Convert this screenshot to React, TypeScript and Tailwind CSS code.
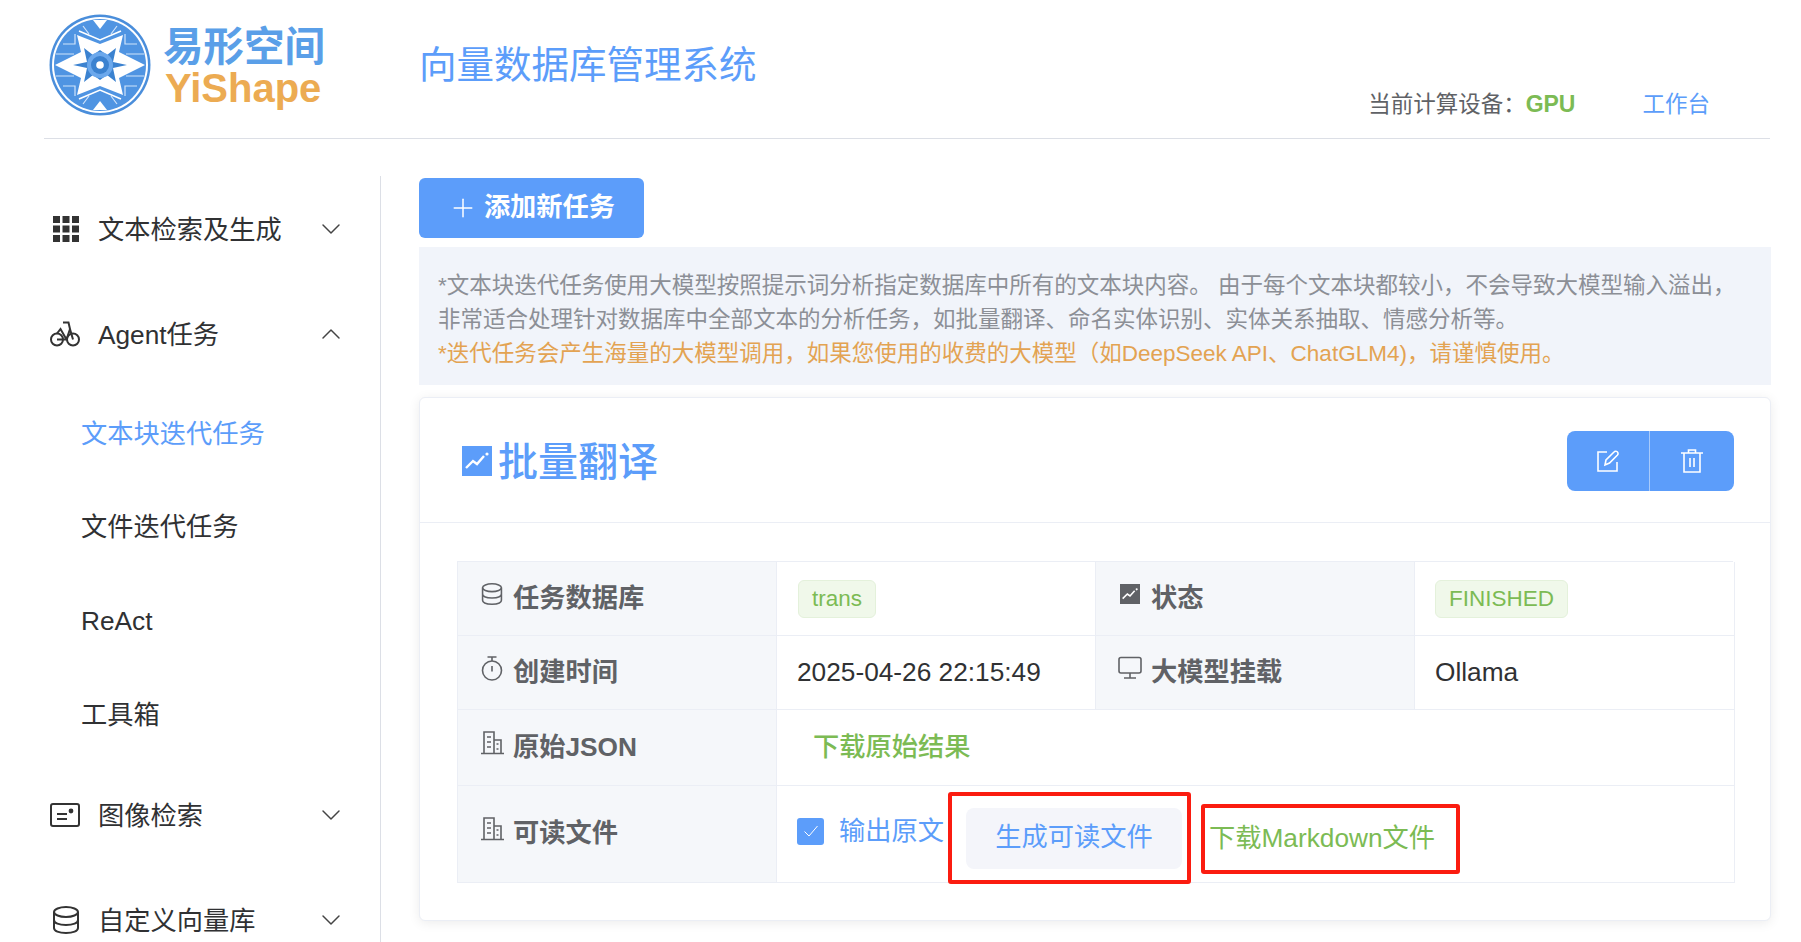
import { ChevronDown, ChevronUp, Plus } from "lucide-react";
import React from "react";

const blue = "#5c9dfa";

const LogoMark = () => (
  <svg viewBox="0 0 102 102" className="h-[102px] w-[102px] shrink-0">
    <circle cx="51" cy="51" r="50.5" fill="#4a8edb" />
    <circle cx="51" cy="51" r="48" fill="#fff" />
    <circle cx="51" cy="51" r="46" fill="#4f94e2" />
    <path
      d="M14 30h12v-10M88 30h-12v-10M14 72h12v10M88 72h-12v10M7 40h18M95 40h-18M7 62h18M95 62h-18M34 12l6 8M68 12l-6 8M34 90l6-8M68 90l-6-8"
      stroke="#cfe3fa"
      strokeWidth="1.2"
      fill="none"
    />
    <path d="M44 6h14L51 15Z" fill="#fff" />
    <path d="M44 96h14L51 87Z" fill="#fff" />
    <path d="M30 17 51 26 72 17" stroke="#fff" strokeWidth="1.6" fill="none" />
    <path d="M30 85 51 76 72 85" stroke="#fff" strokeWidth="1.6" fill="none" />
    <path d="M28 21 51 30 74 21 70 38 96 51 70 64 74 81 51 72 28 81 32 64 6 51 32 38Z" fill="#fff" />
    <path
      d="M24 51 38 48 35 34 44 41 51 36 58 41 67 34 64 48 78 51 64 54 67 68 58 61 51 66 44 61 35 68 38 54Z"
      fill="#3b82d0"
    />
    <circle cx="51" cy="51" r="13" fill="#6ba8ec" />
    <circle cx="51" cy="51" r="9" fill="#3b82d0" />
    <circle cx="51" cy="51" r="3.8" fill="#fff" />
  </svg>
);

const GridIcon = () => (
  <svg viewBox="0 0 26 26" className="ml-[3px] h-[26px] w-[26px]" fill="#333">
    {[0, 9.5, 19].map((y) =>
      [0, 9.5, 19].map((x) => (
        <rect key={`${x}-${y}`} x={x} y={y} width="7" height="7" />
      ))
    )}
  </svg>
);

const BikeIcon = () => (
  <svg viewBox="0 0 30 26" className="h-[26px] w-[30px]" fill="none" stroke="#333" strokeWidth="2">
    <circle cx="7" cy="18.5" r="6" />
    <circle cx="23" cy="18.5" r="6" />
    <path d="M7 18.5h9.5L20 8l-1.5-6.5H13M7 12.5 10.5 8l6 10.5M20 8l3 10.5" />
  </svg>
);

const CardIcon = () => (
  <svg viewBox="0 0 30 24" className="h-[24px] w-[30px]" fill="none" stroke="#333" strokeWidth="2">
    <rect x="1" y="1" width="28" height="22" rx="2" />
    <path d="M7 11h10M7 16h10" />
    <circle cx="21" cy="8" r="1.4" fill="#333" />
  </svg>
);

const DbIcon = ({ size = "large" }: { size?: "large" | "small" }) => (
  <svg
    viewBox="0 0 28 28"
    className={size === "large" ? "ml-[2px] h-[28px] w-[28px]" : "h-[22px] w-[22px]"}
    fill="none"
    stroke={size === "large" ? "#333" : "#606266"}
    strokeWidth="2"
  >
    <ellipse cx="14" cy="6" rx="12" ry="5" />
    <path d="M2 6v16c0 3 5 5 12 5s12-2 12-5V6M2 14c0 3 5 5 12 5s12-2 12-5" />
  </svg>
);

const EditIcon = () => (
  <svg viewBox="0 0 22 22" className="h-[22px] w-[22px]" fill="none" stroke="#fff" strokeWidth="1.6">
    <path d="M10 2H1v19h19v-9" />
    <path d="M8 15l1-5 8-8a1.8 1.8 0 0 1 3.5 3l-8 8Z" />
  </svg>
);

const TrashIcon = () => (
  <svg viewBox="0 0 24 24" className="h-[24px] w-[24px]" fill="none" stroke="#fff" strokeWidth="1.6">
    <path d="M1 4h22M4 4v19h16V4M8.5 4V1h7v3M10 9v9M14 9v9" />
  </svg>
);

const ChartIcon = ({ size = "large" }: { size?: "large" | "small" }) => (
  <svg
    viewBox="0 0 30 30"
    className={size === "large" ? "h-[30px] w-[30px]" : "h-[20px] w-[20px]"}
  >
    <rect width="30" height="30" fill={size === "large" ? blue : "#606266"} />
    <path d="M4 22l7-7 4 3 7-8" fill="none" stroke="#fff" strokeWidth="2.4" />
    <circle cx="25" cy="8" r="1.6" fill="#fff" />
  </svg>
);

const TimerIcon = () => (
  <svg viewBox="0 0 22 25" className="h-[25px] w-[22px]" fill="none" stroke="#606266" strokeWidth="1.6">
    <circle cx="11" cy="14.5" r="9.5" />
    <path d="M6.5 1h9M11 1.5v3.5M11 10v5.5" />
  </svg>
);

const MonitorIcon = () => (
  <svg viewBox="0 0 24 24" className="h-[24px] w-[24px]" fill="none" stroke="#606266" strokeWidth="1.6">
    <rect x="1" y="1.5" width="22" height="15.5" rx="2" />
    <path d="M12 17v5M6 22h12" />
  </svg>
);

const OfficeIcon = () => (
  <svg viewBox="0 0 23 24" className="h-[24px] w-[23px]" fill="none" stroke="#606266" strokeWidth="1.6">
    <path d="M0 22.5h23M3 22.5V1h10v21.5M13 9h7v13.5M6 6h4M6 11h4M6 16h4M15.5 13h2M15.5 18h2" />
  </svg>
);

const SideItem = ({
  icon,
  label,
  open = false,
}: {
  icon: React.ReactNode;
  label: string;
  open?: boolean;
}) => (
  <div className="flex h-[105px] items-center pr-[33px] pl-[50px] text-[26.25px] text-[#303133]">
    <div className="flex w-[48px] shrink-0 items-center">{icon}</div>
    <span className="pt-[5px]">{label}</span>
    <span className="ml-auto">
      {open ? (
        <ChevronUp className="h-[32px] w-[32px] text-[#444]" strokeWidth={1.1} />
      ) : (
        <ChevronDown className="h-[32px] w-[32px] text-[#444]" strokeWidth={1.1} />
      )}
    </span>
  </div>
);

const SubItem = ({ label, active = false }: { label: string; active?: boolean }) => (
  <div
    className={`flex h-[94px] items-center pl-[81px] text-[26.25px] ${
      active ? "pt-[3px] text-[#5c9dfa]" : "pt-[1px] text-[#303133]"
    }`}
  >
    {label}
  </div>
);

const LabelCell = ({
  icon,
  label,
  className,
}: {
  icon: React.ReactNode;
  label: string;
  className: string;
}) => (
  <div
    className={`flex items-start gap-[9px] border-r border-b border-[#ebeef5] bg-[#f5f7fa] pl-[22px] text-[26.25px] font-bold text-[#606266] ${className}`}
  >
    <span className="flex h-[32px] w-[24px] items-center justify-center">{icon}</span>
    <span className="leading-[40px]">{label}</span>
  </div>
);

const Tag = ({ children }: { children: React.ReactNode }) => (
  <span className="inline-flex h-[38px] items-center rounded-[6px] border border-[#e4f1db] bg-[#f0f8ea] px-[13px] text-[22.5px] text-[#7cbb54]">
    {children}
  </span>
);

export default function App() {
  return (
    <div className="h-[942px] overflow-hidden bg-white font-['Liberation_Sans','Noto_Sans_CJK_SC',sans-serif]">
      <header className="mx-[44px] flex h-[139px] w-[1726px] border-b border-[#dcdfe6]">
        <div className="flex w-[375px] shrink-0 items-start pt-[14px] pl-[5px]">
          <LogoMark />
          <div className="ml-[12px] w-[170px] pt-[11px]">
            <div className="h-[41px] text-[40.5px] leading-[44px] font-bold text-[#5a9fe8]">易形空间</div>
            <div className="pl-[2px] text-[40px] leading-[44px] font-bold text-[#ecab52]">YiShape</div>
          </div>
        </div>
        <h1 className="pt-[41px] text-[37.5px] leading-[48px] font-normal text-[#5c9dfa]">
          向量数据库管理系统
        </h1>
        <div className="ml-auto flex items-end gap-[67px] pr-[60px] pb-[16px] text-[22.5px]">
          <span className="text-[#606266]">
            当前计算设备：<span className="text-[23px] font-bold text-[#7cbb54]">GPU</span>
          </span>
          <span className="text-[#5c9dfa]">工作台</span>
        </div>
      </header>

      <div className="flex">
        <aside className="mt-[37px] h-[800px] w-[381px] shrink-0 border-r border-[#dcdfe6]">
          <SideItem icon={<GridIcon />} label="文本检索及生成" />
          <SideItem icon={<BikeIcon />} label="Agent任务" open />
          <SubItem label="文本块迭代任务" active />
          <SubItem label="文件迭代任务" />
          <SubItem label="ReAct" />
          <SubItem label="工具箱" />
          <SideItem icon={<CardIcon />} label="图像检索" />
          <SideItem icon={<DbIcon />} label="自定义向量库" />
        </aside>

        <main className="ml-[38px] w-[1352px] pt-[39px]">
          <button className="flex h-[60px] w-[225px] items-center justify-center gap-[6px] rounded-[6px] bg-[#5c9dfa] text-[26.25px] font-bold text-white">
            <Plus className="h-[30px] w-[30px]" strokeWidth={1.2} />
            添加新任务
          </button>

          <div className="mt-[9px] h-[138px] bg-[#f1f4fa] px-[19px] pt-[22px] text-[22.5px] leading-[34px] text-[#8c8f96]">
            <p>*文本块迭代任务使用大模型按照提示词分析指定数据库中所有的文本块内容。 由于每个文本块都较小，不会导致大模型输入溢出，</p>
            <p>非常适合处理针对数据库中全部文本的分析任务，如批量翻译、命名实体识别、实体关系抽取、情感分析等。</p>
            <p className="text-[#e3a352]">*迭代任务会产生海量的大模型调用，如果您使用的收费的大模型（如DeepSeek API、ChatGLM4)，请谨慎使用。</p>
          </div>

          <section className="mt-[12px] h-[524px] rounded-[6px] border border-[#ebeef5] bg-white shadow-[0_2px_12px_rgba(0,0,0,0.08)]">
            <div className="flex h-[125px] items-center justify-between border-b border-[#ebeef5] pt-[2px] pr-[36px] pl-[42px]">
              <div className="flex items-center gap-[6px] text-[40px] font-medium text-[#5c9dfa]">
                <ChartIcon />
                <span className="pt-[2px]">批量翻译</span>
              </div>
              <div className="flex h-[60px] w-[167px] overflow-hidden rounded-[8px] bg-[#5c9dfa]">
                <div className="flex w-[83px] items-center justify-center border-r border-[#a9cbfb]">
                  <EditIcon />
                </div>
                <div className="flex flex-1 items-center justify-center">
                  <TrashIcon />
                </div>
              </div>
            </div>

            <div className="mx-[37px] mt-[38px] grid grid-cols-[319px_319px_319px_320px] grid-rows-[74px_74px_76px_97px] border-t border-l border-[#ebeef5] text-[26.25px] text-[#303133]">
              <LabelCell icon={<DbIcon size="small" />} label="任务数据库" className="pt-[16px]" />
              <div className="flex items-center border-r border-b border-[#ebeef5] pl-[21px]">
                <Tag>trans</Tag>
              </div>
              <LabelCell icon={<ChartIcon size="small" />} label="状态" className="pt-[16px]" />
              <div className="flex items-center border-r border-b border-[#ebeef5] pl-[20px]">
                <Tag>FINISHED</Tag>
              </div>

              <LabelCell icon={<TimerIcon />} label="创建时间" className="pt-[16px]" />
              <div className="flex items-center border-r border-b border-[#ebeef5] pl-[20px]">
                2025-04-26 22:15:49
              </div>
              <LabelCell icon={<MonitorIcon />} label="大模型挂载" className="pt-[16px]" />
              <div className="flex items-center border-r border-b border-[#ebeef5] pl-[20px]">
                Ollama
              </div>

              <LabelCell icon={<OfficeIcon />} label="原始JSON" className="pt-[17px]" />
              <div className="col-span-3 flex items-center border-r border-b border-[#ebeef5] pl-[36px] font-medium text-[#7cbb54]">
                下载原始结果
              </div>

              <LabelCell icon={<OfficeIcon />} label="可读文件" className="pt-[27px]" />
              <div className="col-span-3 flex items-center border-r border-b border-[#ebeef5] pl-[20px]">
                <span className="flex h-[27px] w-[27px] -translate-y-[3px] items-center justify-center rounded-[3px] bg-[#5c9dfa]">
                  <svg viewBox="0 0 16 16" className="h-[16px] w-[16px]" fill="none" stroke="#fff" strokeWidth="1">
                    <path d="M1.5 8.5 6 13l8.5-10" />
                  </svg>
                </span>
                <span className="ml-[15px] -translate-y-[2px] text-[#5c9dfa]">输出原文</span>
                <div className="mt-[8px] ml-[4px] flex h-[92px] w-[243px] items-center justify-end rounded-[3px] border-4 border-[#fb1c10] pr-[5px]">
                  <button className="h-[61px] w-[216px] rounded-[8px] bg-[#f4f5fa] text-[26.25px] text-[#5c9dfa]">
                    生成可读文件
                  </button>
                </div>
                <div className="mt-[10px] ml-[10px] flex h-[70px] w-[259px] items-center rounded-[3px] border-4 border-[#fb1c10] pl-[4px] text-[#7cbb54]">
                  下载Markdown文件
                </div>
              </div>
            </div>
          </section>
        </main>
      </div>
    </div>
  );
}
